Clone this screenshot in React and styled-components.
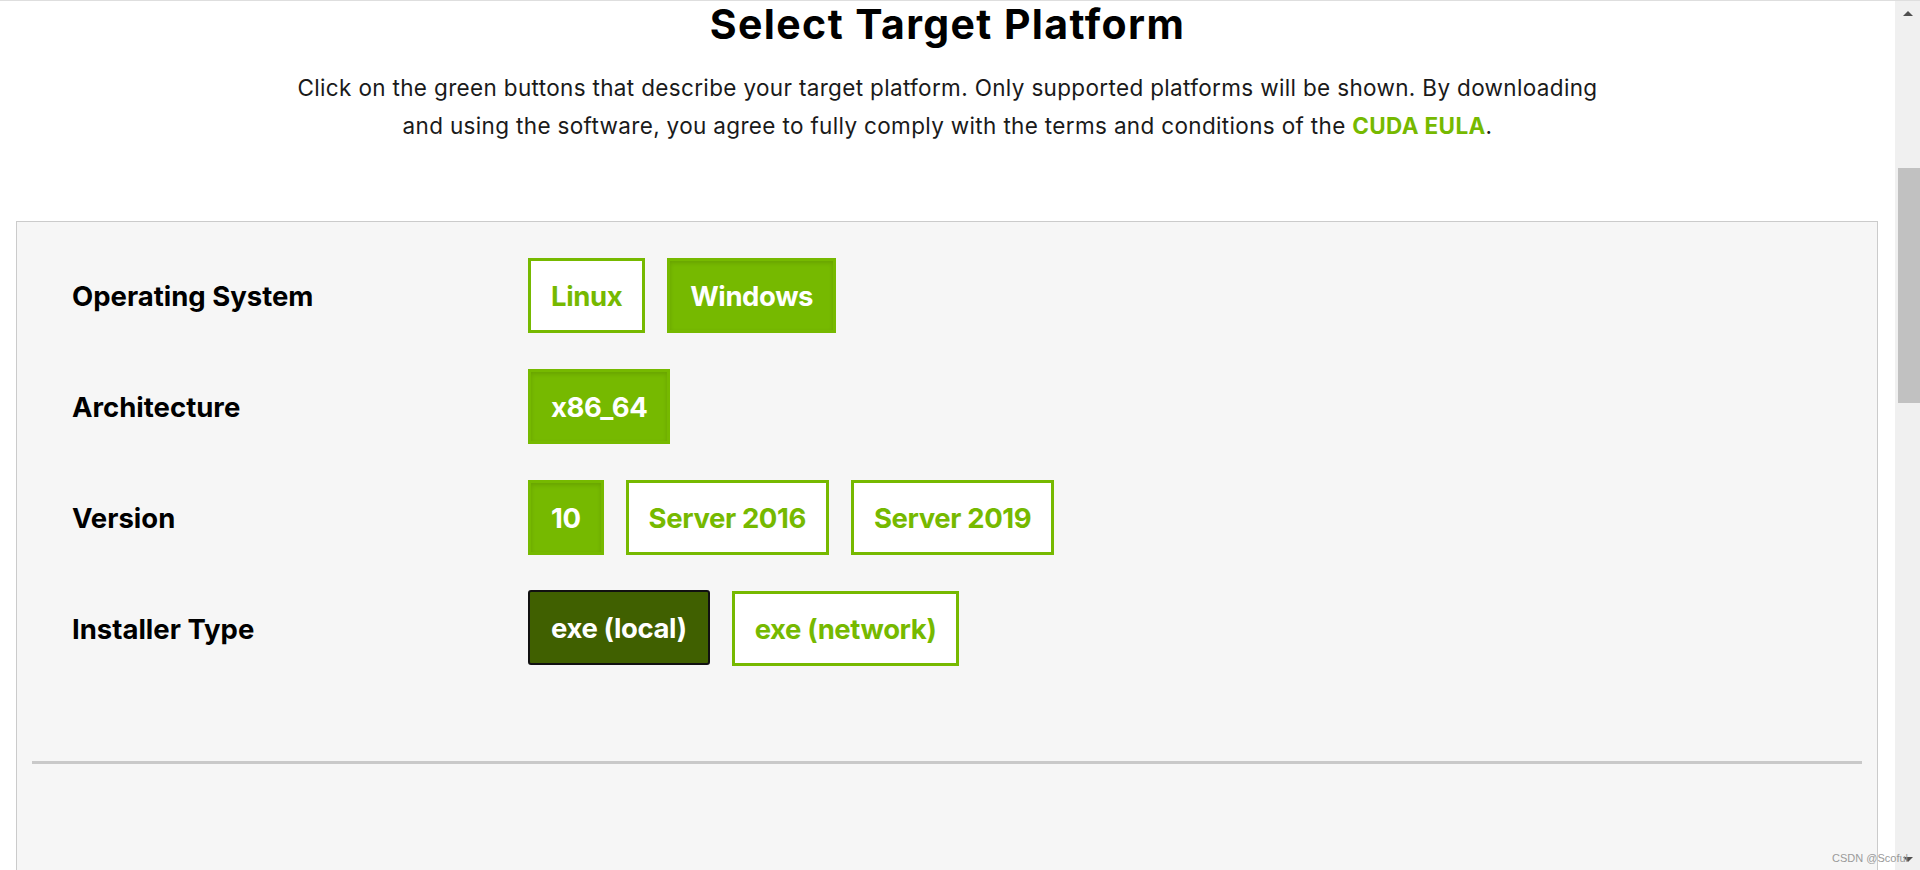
import React, { useState } from 'react';
import styled, { createGlobalStyle } from 'styled-components';

const GlobalStyle = createGlobalStyle`
  html, body {
    margin: 0;
    padding: 0;
    height: 100%;
    overflow: hidden;
    background: #fff;
  }
  body {
    font-family: Inter, "Noto Sans", sans-serif;
    color: #1a1a1a;
  }
`;

const Screen = styled.div`
  display: flex;
  height: 870px;
  position: relative;
`;

const Page = styled.main`
  flex: 1;
  border-top: 1px solid #dedede;
  overflow: hidden;
`;

const Title = styled.h1`
  margin: -1px 0 0;
  text-align: center;
  font-size: 41px;
  line-height: 48px;
  letter-spacing: 1.4px;
  font-weight: 700;
  color: #000;
`;

const Intro = styled.p`
  margin: 21px 0 0;
  text-align: center;
  font-size: 22.5px;
  line-height: 37.5px;
  letter-spacing: 0.34px;
  color: #1a1a1a;
`;

const EulaLink = styled.a`
  color: #76b900;
  font-weight: 700;
  text-decoration: none;
`;

const Panel = styled.section`
  margin: 77px 17px 0 16px;
  border: 1px solid #cbcbcb;
  background: #f6f6f6;
  padding: 36px 0 0;
  min-height: 700px;
`;

const Rows = styled.div`
  display: flex;
  flex-direction: column;
  gap: 36px;
  padding-left: 55px;
`;

const Row = styled.div`
  display: grid;
  grid-template-columns: 456px 1fr;
  align-items: center;
  height: 75px;
`;

const Label = styled.div`
  font-size: 27.5px;
  font-weight: 700;
  color: #000;
`;

const Options = styled.div`
  display: flex;
  gap: 22px;
  height: 75px;
`;

const Option = styled.button`
  box-sizing: border-box;
  height: 75px;
  padding: 0 20px;
  font-family: inherit;
  font-size: 27.5px;
  font-weight: 700;
  letter-spacing: -0.4px;
  cursor: pointer;
  border: 3px solid #76b900;
  border-radius: 0;
  background: ${(p) => (p.$selected ? '#76b900' : '#fff')};
  color: ${(p) => (p.$selected ? '#fff' : '#76b900')};
  box-shadow: ${(p) => (p.$selected ? 'inset 0 2px 4px rgba(0,0,0,0.12)' : 'none')};

  &.focused {
    background: #406000;
    border: 2px solid #111;
    border-radius: 3px;
    color: #fff;
    margin-top: -1px;
    padding: 0 21px;
    box-shadow: none;
  }
`;

const Divider = styled.hr`
  margin: 95px 15px 0;
  border: none;
  height: 3px;
  background: #c9c9c9;
`;

const Scrollbar = styled.div`
  width: 25px;
  background: #f0f0f0;
  display: flex;
  flex-direction: column;
  align-items: center;
  border-top: 1px solid #dedede;
`;

const Arrow = styled.div`
  width: 0;
  height: 0;
  border-left: 5px solid transparent;
  border-right: 5px solid transparent;
  ${(p) =>
    p.$down
      ? 'border-top: 5px solid #505050; margin-top: auto; margin-bottom: 8px;'
      : 'border-bottom: 5px solid #505050; margin-top: 10px;'}
`;

const Thumb = styled.div`
  width: 22px;
  height: 235px;
  margin-top: 152px;
  margin-left: 3px;
  background: #c1c1c1;
`;

const Watermark = styled.div`
  position: absolute;
  right: 12px;
  bottom: 6px;
  font-family: "Liberation Sans", Arial, sans-serif;
  font-size: 11px;
  color: #9a9a9a;
`;

const rows = [
  { label: 'Operating System', options: ['Linux', 'Windows'], selected: 'Windows' },
  { label: 'Architecture', options: ['x86_64'], selected: 'x86_64' },
  { label: 'Version', options: ['10', 'Server 2016', 'Server 2019'], selected: '10' },
  { label: 'Installer Type', options: ['exe (local)', 'exe (network)'], selected: 'exe (local)', focus: true },
];

export default function App() {
  const [choice, setChoice] = useState(() =>
    Object.fromEntries(rows.map((r) => [r.label, r.selected]))
  );

  return (
    <Screen>
      <GlobalStyle />
      <Page>
        <Title>Select Target Platform</Title>
        <Intro>
          Click on the green buttons that describe your target platform. Only supported platforms will be shown. By downloading
          <br />
          and using the software, you agree to fully comply with the terms and conditions of the{' '}
          <EulaLink href="#">CUDA EULA</EulaLink>.
        </Intro>
        <Panel>
          <Rows>
            {rows.map((r) => (
              <Row key={r.label}>
                <Label>{r.label}</Label>
                <Options>
                  {r.options.map((o) => {
                    const on = choice[r.label] === o;
                    return (
                      <Option
                        key={o}
                        $selected={on}
                        className={on && r.focus ? 'focused' : undefined}
                        onClick={() => setChoice({ ...choice, [r.label]: o })}
                      >
                        {o}
                      </Option>
                    );
                  })}
                </Options>
              </Row>
            ))}
          </Rows>
          <Divider />
        </Panel>
      </Page>
      <Scrollbar>
        <Arrow />
        <Thumb />
        <Arrow $down />
      </Scrollbar>
      <Watermark>CSDN @Scoful</Watermark>
    </Screen>
  );
}
